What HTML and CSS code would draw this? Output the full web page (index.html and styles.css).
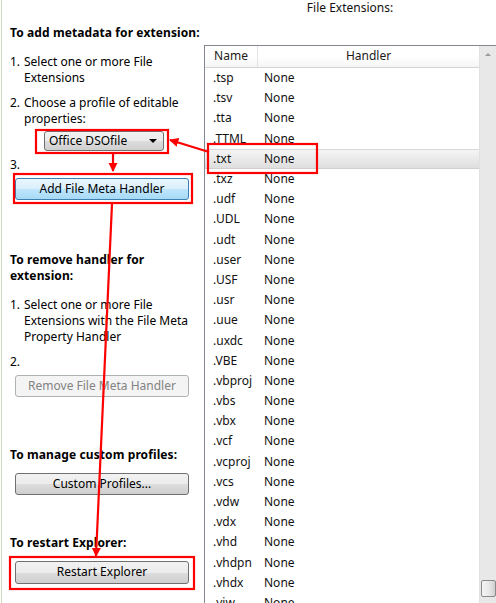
FILE: index.html
```html
<!DOCTYPE html>
<html>
<head>
<meta charset="utf-8">
<link rel="stylesheet" href="styles.css">
</head>
<body>
<div class="page">
  <div class="left">
    <div class="heading h-add">To add metadata for extension:</div>
    <div class="step s-add1"><span class="num">1.</span><span class="txt">Select one or more File<br>Extensions</span></div>
    <div class="step s-add2"><span class="num">2.</span><span class="txt">Choose a profile of editable<br>properties:</span></div>
    <div class="combo"><span class="combo-text">Office DSOfile</span><span class="combo-arrow"></span></div>
    <div class="step s-add3"><span class="num">3.</span></div>
    <div class="btn btn-default">Add File Meta Handler</div>

    <div class="heading h-remove">To remove handler for<br>extension:</div>
    <div class="step s-rem1"><span class="num">1.</span><span class="txt">Select one or more File<br>Extensions with the File Meta<br>Property Handler</span></div>
    <div class="step s-rem2"><span class="num">2.</span></div>
    <div class="btn btn-disabled">Remove File Meta Handler</div>

    <div class="heading h-custom">To manage custom profiles:</div>
    <div class="btn btn-custom">Custom Profiles...</div>

    <div class="heading h-restart">To restart Explorer:</div>
    <div class="btn btn-restart">Restart Explorer</div>
  </div>

  <div class="right">
    <div class="title">File Extensions:</div>
    <div class="listbox">
      <div class="list">
        <div class="header">
          <div class="hcell hname">Name</div>
          <div class="hcell hhandler">Handler</div>
        </div>
        <div class="rows">
          <div class="row"><span class="c-name">.tsp</span><span class="c-handler">None</span></div>
          <div class="row"><span class="c-name">.tsv</span><span class="c-handler">None</span></div>
          <div class="row"><span class="c-name">.tta</span><span class="c-handler">None</span></div>
          <div class="row"><span class="c-name">.TTML</span><span class="c-handler">None</span></div>
          <div class="row selected"><span class="c-name">.txt</span><span class="c-handler">None</span></div>
          <div class="row"><span class="c-name">.txz</span><span class="c-handler">None</span></div>
          <div class="row"><span class="c-name">.udf</span><span class="c-handler">None</span></div>
          <div class="row"><span class="c-name">.UDL</span><span class="c-handler">None</span></div>
          <div class="row"><span class="c-name">.udt</span><span class="c-handler">None</span></div>
          <div class="row"><span class="c-name">.user</span><span class="c-handler">None</span></div>
          <div class="row"><span class="c-name">.USF</span><span class="c-handler">None</span></div>
          <div class="row"><span class="c-name">.usr</span><span class="c-handler">None</span></div>
          <div class="row"><span class="c-name">.uue</span><span class="c-handler">None</span></div>
          <div class="row"><span class="c-name">.uxdc</span><span class="c-handler">None</span></div>
          <div class="row"><span class="c-name">.VBE</span><span class="c-handler">None</span></div>
          <div class="row"><span class="c-name">.vbproj</span><span class="c-handler">None</span></div>
          <div class="row"><span class="c-name">.vbs</span><span class="c-handler">None</span></div>
          <div class="row"><span class="c-name">.vbx</span><span class="c-handler">None</span></div>
          <div class="row"><span class="c-name">.vcf</span><span class="c-handler">None</span></div>
          <div class="row"><span class="c-name">.vcproj</span><span class="c-handler">None</span></div>
          <div class="row"><span class="c-name">.vcs</span><span class="c-handler">None</span></div>
          <div class="row"><span class="c-name">.vdw</span><span class="c-handler">None</span></div>
          <div class="row"><span class="c-name">.vdx</span><span class="c-handler">None</span></div>
          <div class="row"><span class="c-name">.vhd</span><span class="c-handler">None</span></div>
          <div class="row"><span class="c-name">.vhdpn</span><span class="c-handler">None</span></div>
          <div class="row"><span class="c-name">.vhdx</span><span class="c-handler">None</span></div>
          <div class="row"><span class="c-name">.viw</span><span class="c-handler">None</span></div>
        </div>
      </div>
      <div class="scrollbar">
        <div class="sb-up"></div>
        <div class="sb-track"></div>
        <div class="sb-thumb"></div>
      </div>
    </div>
  </div>

  <svg class="annot" width="496" height="603" viewBox="0 0 496 603" xmlns="http://www.w3.org/2000/svg">
    <defs>
      <marker id="ah" viewBox="0 0 10 10" refX="9" refY="5" markerWidth="4.2" markerHeight="4.2" orient="auto-start-reverse" markerUnits="strokeWidth">
        <path d="M0,0 L10,5 L0,10 z" fill="#f00"/>
      </marker>
    </defs>
    <g fill="none" stroke="#f00" stroke-width="2.2">
      <rect x="36" y="130" width="132" height="23"/>
      <rect x="14" y="174" width="178" height="29"/>
      <rect x="208" y="144" width="109" height="29"/>
      <rect x="10" y="557" width="184" height="32"/>
      <line x1="209" y1="152" x2="170" y2="140" marker-end="url(#ah)"/>
      <line x1="113" y1="154" x2="113" y2="171" marker-end="url(#ah)"/>
      <line x1="112" y1="204" x2="96" y2="556" marker-end="url(#ah)"/>
    </g>
  </svg>
</div>
</body>
</html>
```

FILE: styles.css
```css
* { box-sizing: border-box; }

html, body {
  margin: 0;
  padding: 0;
  background: #ffffff;
}

body {
  font-family: "Noto Sans", "Open Sans", "DejaVu Sans", sans-serif;
  font-size: 12px;
  line-height: 16px;
  color: #000;
}

.page {
  position: relative;
  width: 496px;
  height: 603px;
  overflow: hidden;
  display: flex;
}

/* ---------- left column ---------- */
.left {
  width: 204px;
  flex: none;
  padding: 25px 0 0 8px;
  border-left: 1px solid #c9dcbc;
  margin-left: 1px;
  display: flex;
  flex-direction: column;
  align-items: flex-start;
}

.heading {
  font-weight: bold;
  letter-spacing: 0.1px;
}

.step {
  display: flex;
}
.step .num {
  width: 14px;
  flex: none;
}

.s-add1 { margin-top: 13px; }
.s-add2 { margin-top: 9px; }
.s-add3 { margin-top: 6px; }

.combo {
  margin-top: 4px;
  margin-left: 34px;
  width: 120px;
  height: 20px;
  border: 1px solid #707070;
  border-radius: 3px;
  background: linear-gradient(#f2f2f2 0%, #ebebeb 50%, #dddddd 51%, #cfcfcf 100%);
  display: flex;
  align-items: center;
  padding: 0 6px 0 4px;
}
.combo-text { flex: 1; }
.combo-arrow {
  width: 0;
  height: 0;
  border-left: 4px solid transparent;
  border-right: 4px solid transparent;
  border-top: 4px solid #000;
}

.btn {
  margin-left: 5px;
  width: 174px;
  height: 22px;
  border: 1px solid #707070;
  border-radius: 3px;
  background: linear-gradient(#f2f2f2 0%, #ebebeb 50%, #dddddd 51%, #cfcfcf 100%);
  text-align: center;
  line-height: 20px;
  color: #000;
}
.btn-default {
  margin-top: 5px;
  border-color: #3c7fb1;
  background: linear-gradient(#eaf6fd 0%, #d9f0fc 50%, #bee6fd 51%, #a7d9f5 100%);
}
.btn-disabled {
  margin-top: 5px;
  border-color: #adb2b5;
  background: #f4f4f4;
  color: #838383;
}

.h-remove { margin-top: 52px; }
.s-rem1 { margin-top: 13px; }
.s-rem2 { margin-top: 9px; }

.h-custom { margin-top: 50px; }
.btn-custom { margin-top: 10px; }

.h-restart { margin-top: 40px; }
.btn-restart { margin-top: 10px; height: 23px; }

/* ---------- right column ---------- */
.right {
  margin-left: -1px;
  width: 292px;
  flex: none;
  display: flex;
  flex-direction: column;
}

.title {
  text-align: center;
  height: 15px;
  line-height: 15px;
  color: #111;
}

.listbox {
  margin-top: 30px;
  flex: 1;
  display: flex;
  border-top: 1px solid #828790;
  border-left: 1px solid #828790;
}

.list {
  width: 274px;
  flex: none;
  display: flex;
  flex-direction: column;
}

.header {
  height: 22px;
  flex: none;
  display: flex;
  background: linear-gradient(#ffffff 0%, #ffffff 50%, #f4f5f6 100%);
  border-bottom: 1px solid #d5d5d5;
}
.hcell {
  line-height: 20px;
  text-align: center;
  color: #1a1a1a;
}
.hname {
  width: 53px;
  border-right: 1px solid #e3e4e6;
}
.hhandler {
  flex: 1;
}

.rows {
  display: flex;
  flex-direction: column;
}
.row {
  height: 20.2px;
  flex: none;
  display: flex;
  align-items: center;
  color: #111;
  white-space: nowrap;
}
.c-name {
  width: 59px;
  padding-left: 8px;
  overflow: hidden;
}
.c-handler {
  flex: 1;
}
.row.selected {
  background: linear-gradient(#f5f5f5 0%, #eaeaea 50%, #dedede 100%);
  border-top: 1px solid #d9d9d9;
  border-bottom: 1px solid #cfcfcf;
}

.scrollbar {
  width: 17px;
  flex: none;
  position: relative;
  background: #e8e8e8;
  border-left: 1px solid #e1e1e1;
}
.sb-up {
  margin: 7px auto 0;
  width: 0;
  height: 0;
  border-left: 3px solid transparent;
  border-right: 3px solid transparent;
  border-bottom: 3px solid #9a9a9a;
}
.sb-thumb {
  position: absolute;
  left: 1px;
  top: 534px;
  width: 15px;
  height: 17px;
  border: 1px solid #8a8a8a;
  border-radius: 2px;
  background: linear-gradient(90deg, #f4f4f4 0%, #e6e6e6 60%, #cfcfcf 100%);
}

/* ---------- annotation overlay ---------- */
.annot {
  position: absolute;
  left: 0;
  top: 0;
  pointer-events: none;
}
```
